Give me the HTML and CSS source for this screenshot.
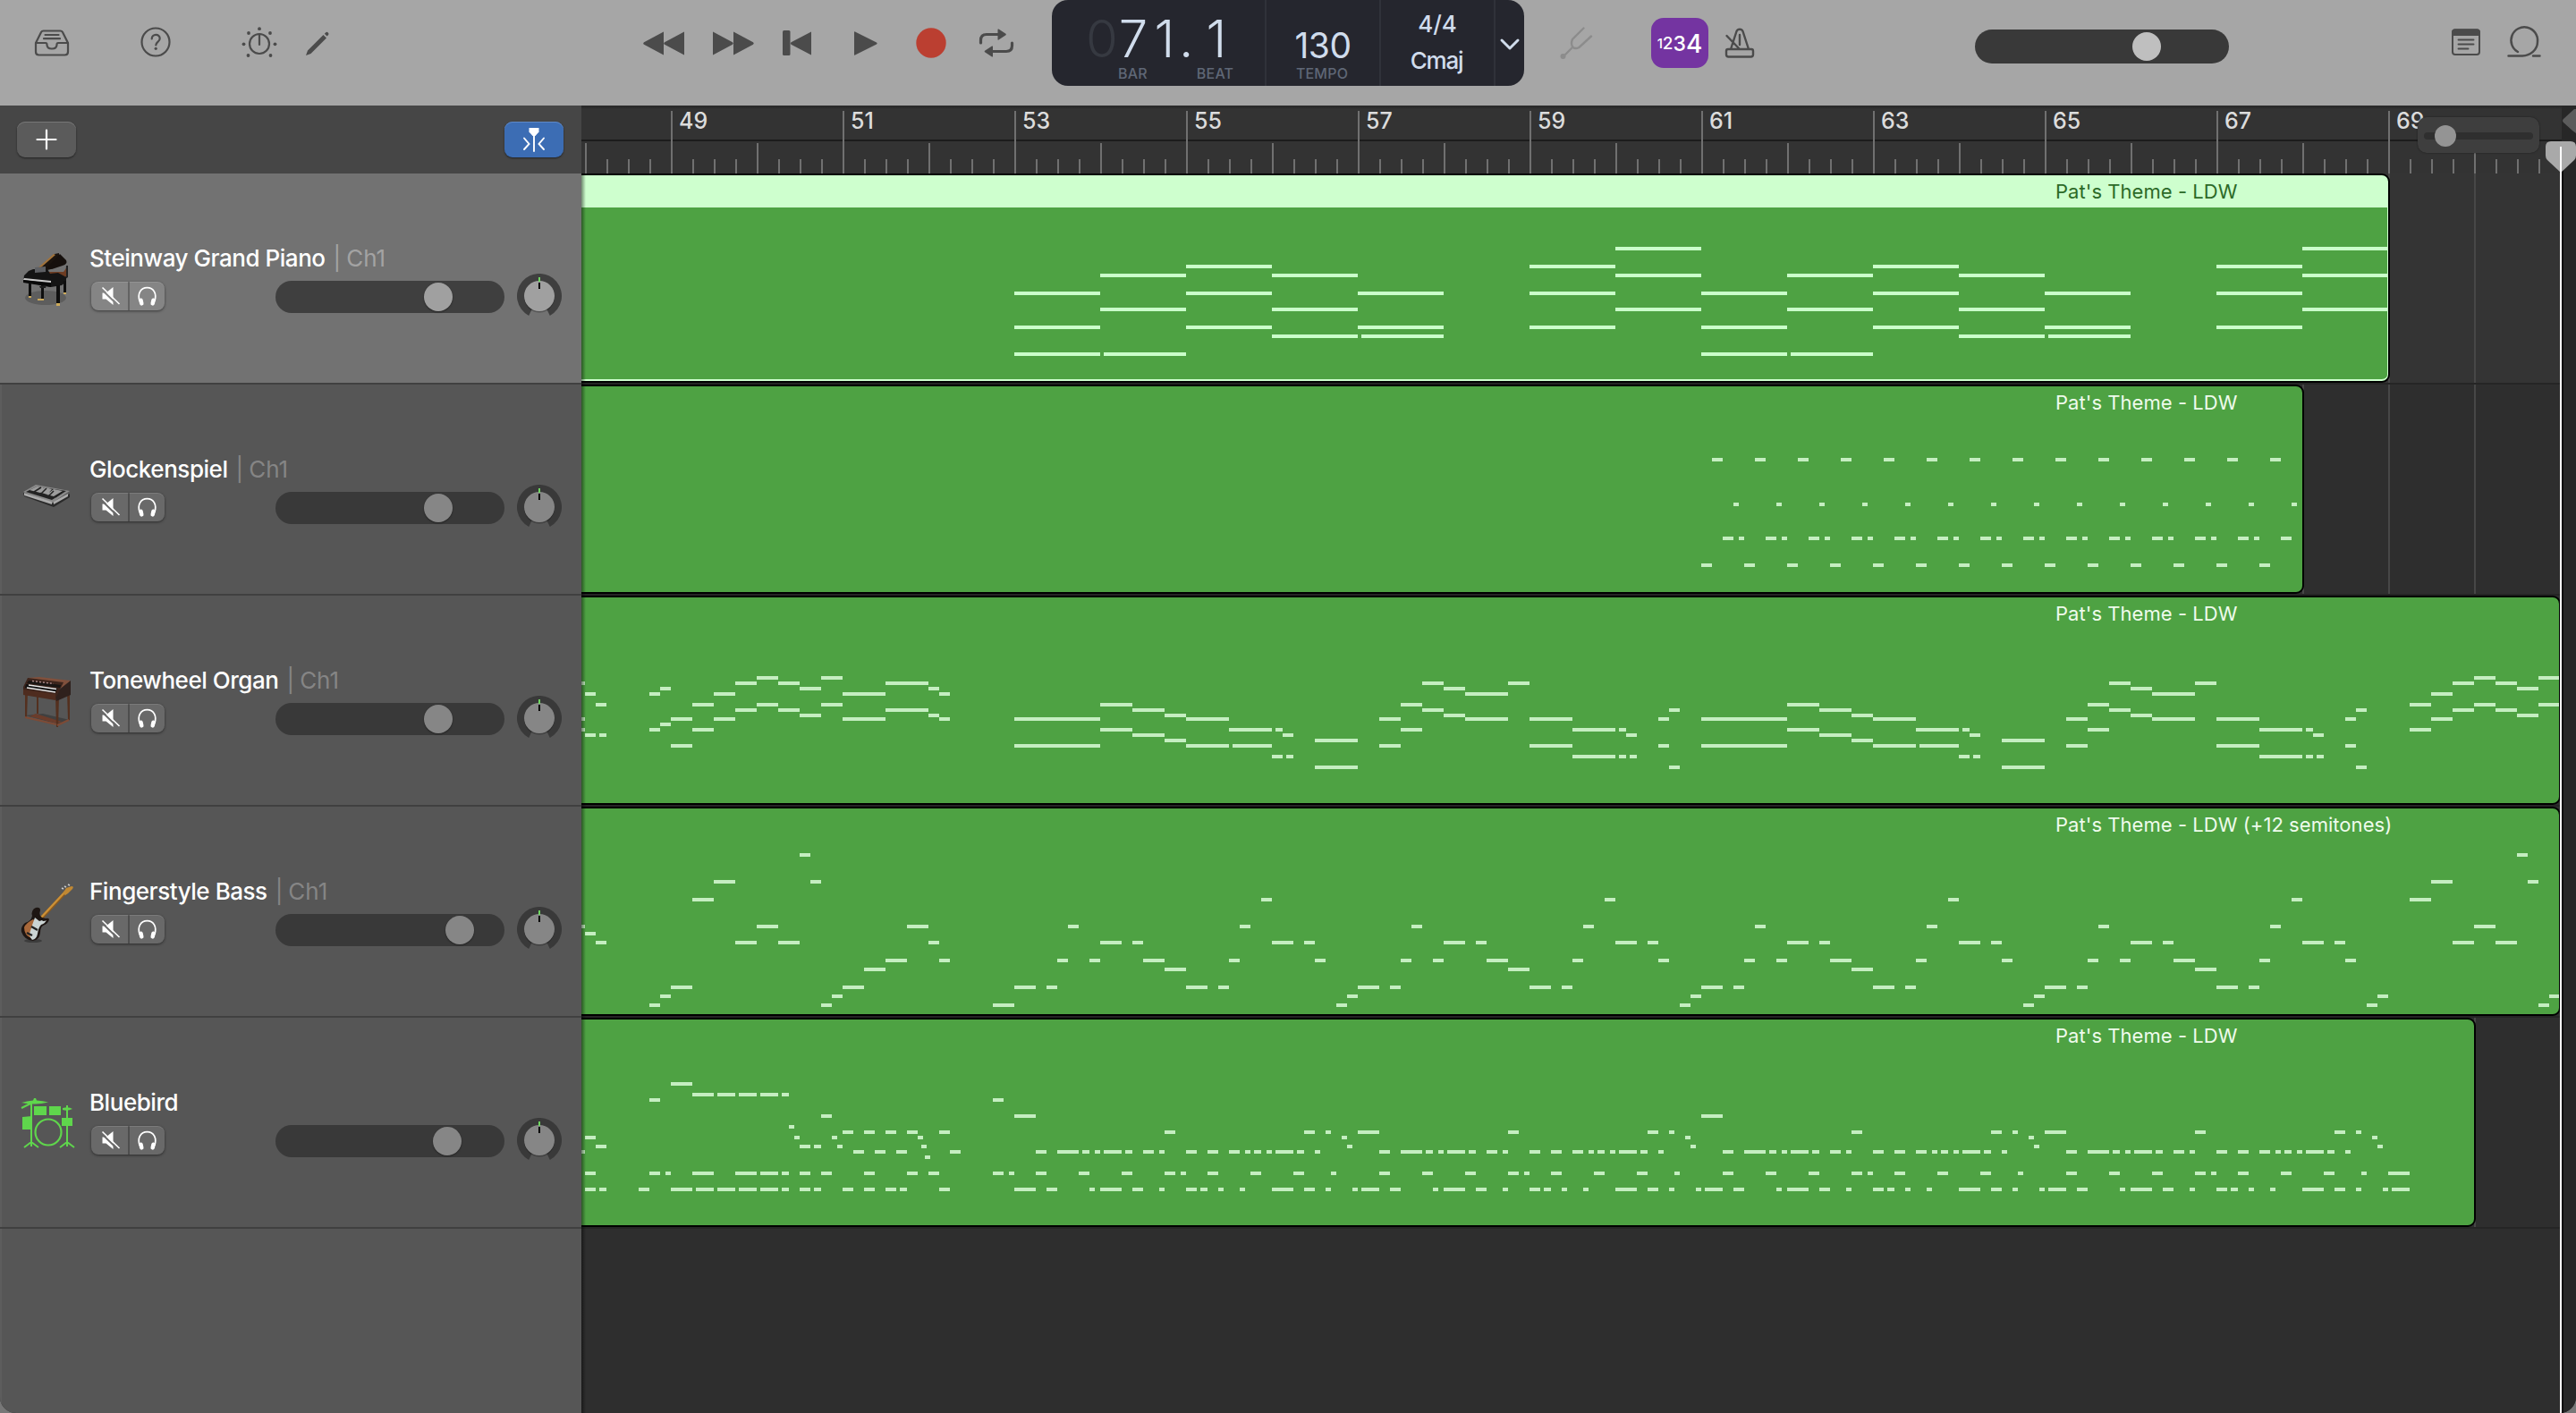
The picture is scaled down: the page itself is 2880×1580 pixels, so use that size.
FILE: index.html
```html
<!DOCTYPE html>
<html lang="en">
<head>
<meta charset="utf-8">
<title>Pat's Theme</title>
<link rel="stylesheet" href="styles.css">
</head>
<body>
<svg class="defs" aria-hidden="true">
  <symbol id="mute" viewBox="0 0 40 32"><path d="M12 12.5h4l8-6.5v20l-8-6.500h-4z" fill="#fff"/><path d="M10.500 8l19 18.500" class="cut"/><path d="M12 6.500l19 18.500" stroke="#fff" stroke-width="1.600"/></symbol>
  <symbol id="phones" viewBox="0 0 40 32"><path d="M11.500 22c-3-8.500 1-15.500 8.500-15.500s11.500 7 8.500 15.500" fill="none" stroke="#fff" stroke-width="1.800"/><rect x="11" y="18.500" width="4.600" height="8.500" rx="2.300" transform="rotate(-12 13 23)" fill="#fff"/><rect x="24.400" y="18.500" width="4.600" height="8.500" rx="2.300" transform="rotate(12 27 23)" fill="#fff"/></symbol>
  <symbol id="knob" viewBox="0 0 50 50"><path d="M13.200 47A25 25 0 1 1 36.800 47L32 37H18z" class="ring"/><circle cx="25" cy="26.500" r="17" fill="#000" opacity=".25"/><circle cx="25" cy="25" r="17" class="cap"/><path d="M25 4v5" stroke="#6fd661" stroke-width="2"/><path d="M25 10v7" stroke="#000" stroke-width="2"/></symbol>
</svg>
<div class="app">
  <header class="toolbar">
    <svg class="ic library" viewBox="0 0 40 40"><g class="ln" stroke-width="2.200"><path d="M2 20L8 8q.8-1.500 2.500-1.500h19Q31.200 6.500 32 8l6 12v10q0 3.500-3.500 3.500h-29Q2 33.500 2 30z"/><path d="M2 20h11q1.500 0 1.500 2 0 4.500 5.500 4.500t5.500-4.500q0-2 1.500-2h11M12.500 11h15M11 15.200h18"/></g></svg>
    <svg class="ic help" viewBox="0 0 40 40"><circle cx="20" cy="19" r="15.500" class="ln" stroke-width="2.200"/><path d="M15.700 15.500c0-6 9-6 9-.5 0 4-4.400 3.800-4.400 7.500" class="ln" stroke-width="2.200"/><circle cx="20.200" cy="26.300" r="1.600" class="fl"/></svg>
    <svg class="ic smart" viewBox="0 0 40 40"><circle cx="20" cy="21" r="11" class="ln" stroke-width="2.200"/><path d="M20 10.500V22" class="ln" stroke-width="2.200"/><g class="fl"><circle cx="20" cy="4.200" r="1.900"/><circle cx="8" cy="9" r="1.900"/><circle cx="32" cy="9" r="1.900"/><circle cx="2.500" cy="21.300" r="1.900"/><circle cx="37.500" cy="21.300" r="1.900"/><circle cx="7.500" cy="34" r="1.900"/><circle cx="32.500" cy="34" r="1.900"/></g></svg>
    <svg class="ic pencil" viewBox="0 0 40 40"><path d="M7 34l2-5.500L26.500 11l3.500 3.500L12.500 32zM27.800 9.700l1.500-1.500q1.200-1 2.500.3t.3 2.500l-1.500 1.500z" class="fl"/></svg>
    <svg class="tr rewind" viewBox="0 0 48 40"><path d="M24 8.200v24.600q0 1-1 .3L2 21.800q-1.600-1.300 0-2.600L23 7.900q1-.7 1 .3zM47 8.200v24.600q0 1-1 .3L25 21.800q-1.600-1.300 0-2.600L46 7.900q1-.7 1 .3z" class="fl"/></svg>
    <svg class="tr forward" viewBox="0 0 48 40"><path d="M24 8.200v24.600q0 1 1 .3l21-11.300q1.600-1.300 0-2.600L25 7.900q-1-.7-1 .3zM1 8.200v24.600q0 1 1 .3l21-11.300q1.600-1.300 0-2.600L2 7.900q-1-.7-1 .3z" class="fl"/></svg>
    <svg class="tr start" viewBox="0 0 48 40"><rect x="8" y="6" width="8.500" height="28" rx="1.500" class="fl"/><path d="M40 8.200v24.600q0 1-1 .3L17.500 21.800q-1.600-1.300 0-2.600L39 7.900q1-.7 1 .3z" class="fl"/></svg>
    <svg class="tr play" viewBox="0 0 48 40"><path d="M11 7.800v25.400q0 1 1 .4l24-12q1.500-1.100 0-2.200l-24-12q-1-.6-1 .4z" class="fl"/></svg>
    <svg class="tr record" viewBox="0 0 48 40"><circle cx="25" cy="20" r="16.700" fill="#bb3f31"/></svg>
    <svg class="tr cycle" viewBox="0 0 48 40"><path d="M6.500 20v-3q0-6.500 6.500-6.500h14M41.500 20v3q0 6.500-6.500 6.500H18" class="ln" stroke-width="3.200"/><path d="M25.500 5q0-1 1-.4l8 5.200q.8.700 0 1.400l-8 5.200q-1 .6-1-.4zM20 24q0-1-1-.4l-8 5.200q-.8.700 0 1.400l8 5.200q1 .6 1-.4z" class="fl"/></svg>
    <div class="lcd">
      <div class="cell pos">
        <div class="big"><span class="dim">0</span><span class="d7">7</span><span class="d1">1</span><span class="dot">.</span><span class="beat">1</span></div>
        <div class="caps"><span>BAR</span><span>BEAT</span></div>
      </div>
      <div class="cell tempo"><div class="mid">130</div><div class="caps one">TEMPO</div></div>
      <div class="cell sig"><div>4/4</div><div class="key">Cmaj</div></div>
      <div class="cell more"><svg width="24" height="16" viewBox="0 0 24 16"><path d="M3 3l9 9 9-9" fill="none" stroke="#d0dcec" stroke-width="3" stroke-linecap="round" stroke-linejoin="round"/></svg></div>
    </div>
    <svg class="ic fork" viewBox="0 0 40 40"><path d="M28.500 3.500L16 16q-2 4.500 0 8t7.500 1L37 12.500M16.500 24.500L6.500 34.500" fill="none" stroke="#8c8c8c" stroke-width="2.400" stroke-linecap="round"/><circle cx="5.500" cy="35" r="3" fill="#8c8c8c"/></svg>
    <div class="count"><span>1</span><span>2</span><span>3</span><span>4</span></div>
    <svg class="ic metro" viewBox="0 0 40 40"><g class="ln" stroke-width="2.400"><path d="M10 27l6.500-20q1-2.200 3.500-2.200T23.500 7L30 27M7 27h26q2 0 2 2v4q0 2.500-2.500 2.500h-25Q5 35.500 5 33v-4q0-2 2-2zM20 11v11M5.500 12l13.500 14"/></g></svg>
    <div class="master"><i></i></div>
    <svg class="ic notes" viewBox="0 0 40 40"><rect x="5" y="5.500" width="30" height="27.500" rx="3" class="ln" stroke-width="2"/><path d="M4 11V8q0-3.800 4-3.800h24q4 0 4 3.800v4H4z" class="fl"/><path d="M11.500 16.500h17M11.500 21.500h17M11.500 26.500h11" class="ln" stroke-width="1.900"/></svg>
    <svg class="ic loop" viewBox="0 0 40 40"><path d="M2.500 34.500H18c9-.5 17-6.500 17-16A14.800 14.800 0 1 0 13 30M30 34.500h7.500" class="ln" stroke-width="2.500"/></svg>
  </header>

  <main class="body">
    <aside class="side">
      <div class="sidehead">
        <div class="btn"><svg width="24" height="24" viewBox="0 0 24 24"><path d="M12 1.500v21M1.500 12h21" stroke="#fff" stroke-width="2.200" stroke-linecap="round"/></svg></div>
        <div class="btn blue"><svg width="28" height="30" viewBox="0 0 28 30"><path d="M8.500 2h11v4.500L15.500 11h-3L8.500 6.500z" fill="#fff"/><path d="M14 8v20M3 13.500l5.500 6.500L3 26M25 13.500L19.500 20l5.500 6" fill="none" stroke="#fff" stroke-width="1.900" stroke-linecap="round"/></svg></div>
      </div>

      <section class="track selected">
        <svg class="inst" viewBox="0 0 64 64">
          <ellipse cx="31" cy="53" rx="23" ry="8" fill="#000" opacity=".18"/>
          <path d="M54 17h2v13l-3 2z" fill="#222"/>
          <path d="M16 26L41 4l5-1 0 3-9 15z" fill="#1b140f"/><path d="M16 25L40 4l2 1-23 20z" fill="#a2733a"/>
          <path d="M32 20l15-16 7 7q2 4-4 6l-12 4z" fill="#16100d"/>
          <path d="M24 24h27l3-4 0 9-24 2z" fill="#6d3c22"/>
          <path d="M7 28l5-5 5-2h16l3 5 9-1 9 5v5l-5 4-12 2L6 35z" fill="#141414"/>
          <path d="M19 19l12-1v6l-12 1z" fill="#5d5f63"/>
          <path d="M7 31l30 3 0 2L6 33z" fill="#c9c9c9"/><path d="M6 33l31 4v4L6 36z" fill="#080808"/>
          <path d="M12 36h3v16h-3zM26 39h3v15h-3zM43 39h4v21h-4zM51 34h3v14h-3z" fill="#0e0e0e"/><path d="M24 40l8-1-1 3h-6z" fill="#1c1c1c"/>
          <path d="M12 51h3v2h-3zM22 54h7v2h-7zM43 59h4v3h-4zM51 47h3v2h-3z" fill="#cba95a"/>
        </svg>
        <div class="info"><div class="name">Steinway Grand Piano<span class="sep">|</span><span class="ch">Ch1</span></div>
          <div class="controls"><div class="pair"><svg><use href="#mute"/></svg><svg><use href="#phones"/></svg></div><div class="vol"><i style="left:166px"></i></div><svg class="knob"><use href="#knob"/></svg></div></div>
      </section>

      <section class="track">
        <svg class="inst" viewBox="0 0 64 64">
          <path d="M6 35L39 47 58 36v4L40 51 7 39z" fill="#2a2a2a"/>
          <path d="M6 34L20 26 58 33 39 46z" fill="#8a8a8a"/>
          <path d="M9 34l12-6 33 5-16 10z" fill="#222"/>
          <path d="M13 32l8-4 8 1-4 6zM23 34l7-5 8 2-5 6zM32 37l8-6 10 2-10 6z" fill="#9c9c9c"/>
          <path d="M7 35l31 10v3L7 38zM40 45l16-9v3l-16 9z" fill="#aaa"/>
          <path d="M18 34l8-5M26 36l6-6M34 39l6-6M42 40l7-5" stroke="#222" stroke-width="1.500"/>
        </svg>
        <div class="info"><div class="name">Glockenspiel<span class="sep">|</span><span class="ch">Ch1</span></div>
          <div class="controls"><div class="pair"><svg><use href="#mute"/></svg><svg><use href="#phones"/></svg></div><div class="vol"><i style="left:166px"></i></div><svg class="knob"><use href="#knob"/></svg></div></div>
      </section>

      <section class="track">
        <svg class="inst" viewBox="0 0 64 64">
          <path d="M8 48L46 58l12-5-30-7z" fill="#000" opacity=".25"/>
          <path d="M20 46l-7 3 31 8 5-2z" fill="#6b3c2b"/>
          <path d="M8 22h3l-1 29H8zM42 27h4l-1 34h-2zM55 22h3v31h-2zM21 24h2v22h-2z" fill="#54301f"/>
          <path d="M8 50l35 8M44 59l13-6" stroke="#7d4a35" stroke-width="2"/>
          <path d="M11 6l13-1 35 4-9 8-41-5z" fill="#80503c"/>
          <path d="M50 16l9-7v16L43 32l-2-8z" fill="#2f211d"/>
          <path d="M6 16l5-10 40 5-5 10-4 9-36-6z" fill="#3b241c"/>
          <path d="M12 9l36 5-1 3-37-5z" fill="#191513"/><path d="M16 9.500l24 3" stroke="#a88" stroke-width="1.300" stroke-dasharray="2 2"/>
          <path d="M9 13l35 5-2 4L8 17z" fill="#111"/><path d="M12 14l31 4.500M10 17l32 5" stroke="#e6e6e6" stroke-width="1.500"/>
          <path d="M6 19l36 5v7L6 25z" fill="#4e2c1f"/>
        </svg>
        <div class="info"><div class="name">Tonewheel Organ<span class="sep">|</span><span class="ch">Ch1</span></div>
          <div class="controls"><div class="pair"><svg><use href="#mute"/></svg><svg><use href="#phones"/></svg></div><div class="vol"><i style="left:166px"></i></div><svg class="knob"><use href="#knob"/></svg></div></div>
      </section>

      <section class="track">
        <svg class="inst" viewBox="0 0 64 64">
          <ellipse cx="17" cy="64" rx="10" ry="2" fill="#000" opacity=".3"/>
          <path d="M24 41L53 10" stroke="#8d5a1d" stroke-width="3.800"/><path d="M24 40L53 9" stroke="#cb9138" stroke-width="2.300"/>
          <path d="M50 11l4-6 6-2q3 0 1 3l-5 5-3 2z" fill="#c08833"/>
          <path d="M49 5l2 1M52 3l2 1M56 1l2 1" stroke="#ccc" stroke-width="1.500"/>
          <path d="M16 36q-2-6 4-9 5-1 5 3-2 6 2 8l4 1q3-1 4 1-1 5-7 7-3 2-3 8-1 8-8 9-10-1-13-10-1-6 4-10 7-2 8-8z" fill="#1d1512"/>
          <path d="M17 40q-8 4-10 9 0 9 8 12 5 0 6-8l3-8z" fill="#a9683a"/>
          <path d="M19 38l5 4 3-1 1 1q3 0 4-1-2 4-6 5-3 3-4 10-1 6-6 7-3-3-3-7 3-10 6-18z" fill="#cbd4d4"/>
          <path d="M15 48l7 4M10 55l6 3" stroke="#222" stroke-width="2.500"/>
        </svg>
        <div class="info"><div class="name">Fingerstyle Bass<span class="sep">|</span><span class="ch">Ch1</span></div>
          <div class="controls"><div class="pair"><svg><use href="#mute"/></svg><svg><use href="#phones"/></svg></div><div class="vol"><i style="left:190px"></i></div><svg class="knob"><use href="#knob"/></svg></div></div>
      </section>

      <section class="track">
        <svg class="inst" viewBox="0 0 64 64">
          <g fill="#5fd64c"><path d="M4 9q6-2 13-2.500l1-2.500h2l1 2.500q7 .5 13 2-8 2-15 2T4 9zM18 13h14v10H18zM35 13h13v10H35zM5 25l11-1v15H5zM49 26h12v9H49zM50 15q7-2 11 1-6 3-11 1z"/></g>
          <g fill="none" stroke="#5fd64c" stroke-width="2"><path d="M4 15l10-5M15 10v38M7 59l8-6 8 6M15 46v12M55 12v38M47 59l8-6 8 6M55 46v12"/><circle cx="34" cy="42" r="14.500" stroke-width="2.200"/></g>
        </svg>
        <div class="info"><div class="name">Bluebird</div>
          <div class="controls"><div class="pair"><svg><use href="#mute"/></svg><svg><use href="#phones"/></svg></div><div class="vol"><i style="left:176px"></i></div><svg class="knob"><use href="#knob"/></svg></div></div>
      </section>
    </aside>

    <div class="arrange">
      <div class="ruler"><div class="scale"><span>49</span><span>51</span><span>53</span><span>55</span><span>57</span><span>59</span><span>61</span><span>63</span><span>65</span><span>67</span><span>69</span></div></div>
      <div class="lane selected"><div class="region picked r1"><svg class="notes-map" id="piano"></svg><span class="label">Pat's Theme - LDW</span></div></div>
      <div class="lane"><div class="region r2"><svg class="notes-map" id="glock"></svg><span class="label">Pat's Theme - LDW</span></div></div>
      <div class="lane"><div class="region r3"><svg class="notes-map" id="organ"></svg><span class="label">Pat's Theme - LDW</span></div></div>
      <div class="lane"><div class="region r4"><svg class="notes-map" id="bass"></svg><span class="label">Pat's Theme - LDW (+12 semitones)</span></div></div>
      <div class="lane"><div class="region r5"><svg class="notes-map" id="drums"></svg><span class="label">Pat's Theme - LDW</span></div></div>
      <div class="edge"></div>
      <div class="past"></div>
      <div class="zoomer"><i></i></div>
      <svg class="endmark" width="16" height="30" viewBox="0 0 16 30"><path d="M16 2l-2 0-12 11q-2 2 0 4l10 9 4 3z" fill="#5c5c5c"/></svg>
      <div class="playline"></div>
      <svg class="playcap" width="34" height="36" viewBox="0 0 34 36"><path d="M0 6q0-6 6-6h22q6 0 6 6v10q0 3-2 5L17 35 2 21q-2-2-2-5z" fill="#a9a9a9"/><path d="M17 6v30" stroke="#fff" stroke-width="2"/></svg>
    </div>
  </main>
</div>
<script src="notes.js"></script>
</body>
</html>
```
FILE: styles.css
```css
* { box-sizing: border-box; }
body { margin: 0; background: #777; font-family: Inter, "Liberation Sans", sans-serif; }
.defs { position: absolute; width: 0; height: 0; }
.app { width: 2880px; height: 1580px; display: flex; flex-direction: column; overflow: hidden; border-radius: 0 0 18px 18px; background: #2e2e2e; }

.toolbar { height: 118px; flex: none; display: flex; align-items: flex-start; padding-top: 28px; background: #a6a6a6; }
.toolbar > * { flex: none; }
.ic { width: 40px; height: 40px; }
.tr { width: 48px; height: 40px; }
.ln { fill: none; stroke: #4b4b4b; stroke-linecap: round; stroke-linejoin: round; }
.fl { fill: #4b4b4b; }
.library { margin-left: 38px; }
.help, .smart { margin-left: 76px; }
.pencil { margin-left: 25px; }
.rewind { margin-left: 343px; }
.forward { margin-left: 30px; }
.start { margin-left: 23px; }
.play { margin-left: 29px; }
.record { margin-left: 24px; }
.cycle { margin-left: 26px; }
.fork { margin-left: 38px; }
.metro { margin-left: 15px; }
.notes { margin-left: 245px; }
.loop { margin-left: 25px; }

.lcd { margin: -28px 0 0 38px; width: 528px; height: 96px; border-radius: 18px; background: #25262e; color: #d0dcec; display: grid; grid-template-columns: 238px 128px 128px 34px; }
.cell + .cell { border-left: 2px solid #30323a; }
.pos { padding: 8px 0 0 38px; }
.big { height: 65px; line-height: 71px; font-size: 58px; font-weight: 350; display: flex; }
.big span { width: 37px; text-align: center; }
.big .dim { color: #363941; width: 34px; }
.big .d7 { width: 38px; }
.big .d1 { width: 32px; }
.big .dot { width: 16px; }
.big .beat { width: 52px; }
.caps { font-size: 16px; line-height: 18px; font-weight: 500; letter-spacing: .2px; color: #5f6776; display: flex; }
.pos .caps { padding-left: 36px; gap: 55px; }
.caps.one { justify-content: center; padding-right: 2px; }
.tempo { padding-top: 23px; }
.mid { height: 50px; line-height: 56px; font-size: 39px; text-align: center; letter-spacing: -.5px; }
.sig { padding-top: 7px; text-align: center; font-size: 26px; line-height: 40px; font-weight: 550; }
.key { letter-spacing: -1.2px; padding: 1px 2px 0 0; }
.more { display: flex; align-items: center; justify-content: center; padding-top: 4px; }

.count { margin: -8px 0 0 64px; width: 64px; height: 56px; border-radius: 14px; background: #7434a1; color: #fff; font-weight: 500; display: flex; align-items: center; justify-content: center; padding-top: 1px; }
.count span:nth-child(1) { font-size: 15px; }
.count span:nth-child(2) { font-size: 19px; }
.count span:nth-child(3) { font-size: 23px; }
.count span:nth-child(4) { font-size: 28px; }
.master { margin: 5px 0 0 243px; width: 284px; height: 38px; border-radius: 19px; background: #393939; position: relative; }
.master i { position: absolute; left: 176px; top: 3px; width: 32px; height: 32px; border-radius: 50%; background: #bfbfbf; }

.body { flex: 1; display: flex; }
.side { width: 650px; flex: none; background: #565656; box-shadow: inset 2px 0 #5d5d5d; }
.sidehead { height: 76px; padding: 18px 20px 0 19px; display: flex; justify-content: space-between; background: #464646; }
.btn { width: 66px; height: 40px; border-radius: 9px; background: #5b5b5b; box-shadow: inset 0 1px #777, 0 1px 2px #222; display: flex; align-items: center; justify-content: center; }
.btn.blue { background: #3c6db4; box-shadow: inset 0 1px #6089c4, 0 1px 2px #222; }

.track { height: 236px; border-bottom: 2px solid #404040; padding-left: 20px; display: flex; align-items: flex-start; --ring: #393939; --cap: #868686; --btn: #696969; }
.track.selected { background: #727272; --ring: #3f3f3f; --cap: #a0a0a0; --btn: #858585; }
.inst { width: 64px; height: 64px; margin-top: 86px; flex: none; overflow: visible; }
.info { flex: 1; padding: 78px 22px 0 16px; }
.name { height: 34px; line-height: 33px; font-size: 26px; font-weight: 500; letter-spacing: -.46px; color: #fff; white-space: nowrap; }
.sep, .ch { font-weight: 400; color: #858585; letter-spacing: 0; }
.selected .sep, .selected .ch { color: #a3a3a3; }
.sep { margin: 0 6px 0 9px; }
.controls { display: flex; align-items: center; height: 50px; }
.pair { margin-left: 2px; width: 82px; height: 32px; display: flex; border-radius: 8px; background: var(--btn); box-shadow: inset 0 1px rgba(255,255,255,.12), 0 1px 3px rgba(0,0,0,.5); }
.pair svg { width: 41px; height: 32px; }
.pair svg + svg { border-left: 2px solid rgba(0,0,0,.25); }
.cut { stroke: var(--btn); stroke-width: 2; }
.vol { position: relative; margin: 2px 14px 0 auto; width: 256px; height: 36px; border-radius: 18px; background: var(--ring); }
.vol i { position: absolute; top: 2px; width: 32px; height: 32px; border-radius: 50%; background: var(--cap); box-shadow: 0 1px 2px rgba(0,0,0,.4); }
.knob { width: 50px; height: 50px; }
.ring { fill: var(--ring); }
.cap { fill: var(--cap); }

.arrange { position: relative; width: 2230px; overflow: hidden; }
.ruler { height: 76px; background: linear-gradient(#2a2a2a 2px, #333 4px 38px, #1c1c1c 38px 40px, #333 40px); }
.scale { width: 2212px; height: 76px; display: flex; padding-left: 109px; overflow: hidden;
  background:
    repeating-linear-gradient(90deg, #707070 0 2px, transparent 2px 192px) 100px 6px / 2112px 70px no-repeat,
    repeating-linear-gradient(90deg, #707070 0 2px, transparent 2px 96px) 4px 42px / 2208px 34px no-repeat,
    repeating-linear-gradient(90deg, #707070 0 2px, transparent 2px 24px) 4px 60px / 2208px 16px no-repeat; }
.scale span { flex: none; width: 192px; font-size: 25px; font-weight: 500; line-height: 34px; color: #dcdcdc; }
.lane { height: 236px; border-bottom: 2px solid #252525; background: repeating-linear-gradient(90deg, #474747 0 2px, transparent 2px 96px) 4px 0, #2e2e2e; }
.lane.selected { background-color: #343434; }
.region { position: relative; height: 234px; border: 2px solid #000; border-left: 0; border-radius: 0 9px 9px 0; background: #4ea243; overflow: hidden; color: #eefbec; }
.region.picked { background: linear-gradient(#ceffce 36px, #4ea243 36px); color: #2c6a28; box-shadow: inset 0 -2px #ceffce, inset -1px 0 #ceffce; }
.r1 { width: 2022px; }
.r2 { width: 1926px; }
.r3, .r4 { width: 2213px; }
.r5 { width: 2118px; }
.notes-map { display: block; width: 100%; height: 230px; margin-bottom: -230px; fill: #c5eec1; }
.picked .notes-map { fill: #caffca; }
.label { display: block; margin-left: 1648px; font-size: 22px; line-height: 36px; letter-spacing: .05px; white-space: nowrap; }

.edge { position: absolute; left: 0; top: 76px; width: 5px; bottom: 0; background: linear-gradient(90deg, rgba(0,0,0,.45), transparent); }
.past { position: absolute; left: 2214px; top: 0; right: 0; bottom: 0; background: #272727; }
.zoomer { position: absolute; left: 2053px; top: 13px; width: 136px; height: 40px; border-radius: 10px; background: #3e3e3e; box-shadow: 0 0 2px #1c1c1c; }
.zoomer::before { content: ""; position: absolute; left: 7px; top: 17px; width: 122px; height: 8px; border-radius: 4px; background: #2f2f2f; }
.zoomer i { position: absolute; left: 19px; top: 9px; width: 24px; height: 24px; border-radius: 50%; background: #949494; }
.endmark { position: absolute; left: 2214px; top: 2px; }
.playline { position: absolute; left: 2212px; top: 72px; width: 2px; bottom: 0; background: #fff; box-shadow: 1px 0 0 1px #0b0b0b; }
.playcap { position: absolute; left: 2196px; top: 40px; }
```
FILE: notes.js
```javascript
// Note lists per region. Each line is "y: start-end ..." in sixteenths counted from bar 49;
// y is the note's top edge within the region. One sixteenth is 6px wide.
const STEP = 6, ORIGIN = 100;

function draw(id, rows) {
  let d = '';
  for (const [y, notes] of rows)
    for (const [a, b] of notes) {
      const x1 = Math.round(ORIGIN + a * STEP), x2 = Math.round(ORIGIN + b * STEP);
      d += `M${x1} ${y}h${x2 - x1}v4h${x1 - x2}z`;
    }
  const path = document.createElementNS('http://www.w3.org/2000/svg', 'path');
  path.setAttribute('d', d);
  document.getElementById(id).append(path);
}
// "a,b a,b" -> [[a,b],[a,b]]
const n = s => s.split(' ').map(p => p.split(',').map(Number));
const shift = (list, by) => list.map(([a, b]) => [a + by, b + by]);
// Whole-bar notes counted from bar 53; "+" marks a slightly late start.
const bars = s => s.split(' ').map(p => {
  const b = 64 + parseInt(p) * 16;
  return [p.endsWith('+') ? b + 0.67 : b, b + 16];
});
const every = (a, b, count) => Array.from({ length: count }, (_, i) => [a + i * 8, b + i * 8]);

draw('piano', [
  [80, bars('7 15')], [100, bars('2 6 10 14')], [110, bars('1 3 7 9 11 15')],
  [130, bars('0 2 4 6 8 10 12 14')], [148, bars('1 3 7 9 11 15')],
  [168, bars('0 2 4 6 8 10 12 14')], [178, bars('3 4+ 11 12+')], [198, bars('0 1+ 8 9+')]
]);

draw('glock', [
  [80, every(194, 196, 14)], [130, every(198, 199, 14)],
  [168, [...every(196, 198, 14), ...every(199, 200, 13)]], [198, every(192, 194, 14)]
]);

draw('organ', [
  [88, n('16,20 28,32 336,340 348,352')],
  [94, n('-18,-16 12,16 20,24 40,48 140,144 156,160 268,272 284,288 332,336 340,344')],
  [100, n('-2,0 24,28 48,50 144,148 272,276 344,348')],
  [106, n('-16,-14 -4,-2 8,12 32,40 50,52 148,156 276,284 328,332')],
  [118, n('-14,-12 4,8 16,20 28,32 80,86 136,140 208,214 264,268 324,328 336,340 348,352')],
  [124, n('12,16 20,24 40,48 86,92 140,144 186,188 214,220 268,272 314,316 332,336 340,344')],
  [130, n('24,28 48,50 92,96 144,148 220,224 272,276 344,348')],
  [134, n('-18,-16 0,4 8,12 32,40 50,52 64,80 96,104 132,136 148,156 160,168 184,186 192,208 224,232 260,264 276,284 288,296 312,314 328,332')],
  [140, n('-2,0')],
  [146, n('-18,-16 -4,-2 4,8 80,86 104,112 112.67,114 136,140 168,176 176.67,178 208,214 232,240 240.67,242 264,268 296,304 304.67,306 324,328')],
  [152, n('-16,-14 -13.33,-12 86,92 114,116 178,180 214,220 242,244 306,308')],
  [158, n('92,96 120,128 220,224 248,256')],
  [164, n('0,4 64,80 96,104 104.67,112 132,136 160,168 184,186 192,208 224,232 232.67,240 260,264 288,296 312,314')],
  [176, n('112,114 114.67,116 168,176 176.67,178 178.67,180 240,242 242.67,244 296,304 304.67,306 306.67,308')],
  [188, n('120,128 186,188 248,256 314,316')]
]);

draw('bass', [
  [50, n('24,26 344,346')],
  [80, n('8,12 26,28 328,332 346,348')],
  [100, n('4,8 110,112 174,176 238,240 302,304 324,328')],
  [130, n('-18,-16 16,20 44,48 74,76 106,108 138,140 170,172 202,204 234,236 266,268 298,300 336,340')],
  [138, n('-16,-14')],
  [148, n('-14,-12 12,16 20,24 48,50 80,84 86,88 112,116 118,120 144,148 150,152 176,180 182,184 208,212 214,216 240,244 246,248 272,276 278,280 304,308 310,312 332,336 340,344')],
  [168, n('40,44 50,52 72,74 78,80 88,92 104,106 120,122 136,138 142,144 152,156 168,170 184,186 200,202 206,208 216,220 232,234 248,250 264,266 270,272 280,284 296,298 312,314')],
  [178, n('36,40 92,96 156,160 220,224 284,288')],
  [198, n('0,4 32,36 64,68 70,72 96,100 102,104 128,132 134,136 160,164 166,168 192,196 198,200 224,228 230,232 256,260 262,264 288,292 294,296')],
  [208, n('-2,0 30,32 126,128 190,192 254,256 318,320 350,352')],
  [218, n('-4,-2 28,30 60,64 124,126 188,190 252,254 316,318 348,350')]
]);

// The drum part repeats every four bars from bar 53.
const hat = n('4,6 8,12 12.67,14 15,16 16.67,20 20.67,22 24,26 27,28 32,34 36,38 40,42 43,44 44.67,46 47,48 48.67,52 52.67,54 56,57');
const snare = n('4,6 12,14 20,22 28,30 31,32 36,38 44,46 52,54 59,60');
const kick = n('6,8 14,15 16,20 22,24 27,28 32,34 34.67,36 38,39 42,43 48,52 54,56 58,59 63,64');
const loop = list => [64, 128, 192, 256].flatMap(s => shift(list, s));
draw('drums', [
  [70, n('0,4')], [82, n('4,8 8.67,12 12.67,16 16.67,20 20.67,22')],
  [88, n('-4,-2 60,62')], [106, n('28,30 64,68 192,196')], [118, n('22,23')],
  [124, [...n('32,34 36,38 40,42 44,46 50,52 128,132 256,260'), ...loop(n('28,30 54,56 58,59'))]],
  [130, [...n('-16,-14 23,24 30,31 46,47'), ...loop(n('61,62'))]],
  [140, [...n('-14,-12 24,26 26.67,28 31,32 46.67,47.67'), ...loop(n('62,63'))]],
  [146, [...n('-18,-16 34,36 38,40 42,44 52,54'), ...loop(hat)]],
  [152, n('47.33,48.33')],
  [170, [...n('-16,-14 -4,-2 -1,0 4,8 12,16 16.67,20 20.67,22 24,26 28,30 36,38 44,46 48,50 60,62 63,64 320,324'), ...loop(snare)]],
  [188, [...n('-16,-14 -13.33,-12 -6,-4 0,4 4.67,8 8.67,12 12.67,16 16.67,20 20.67,22 24,26 26.67,28 32,34 36,38 40,42 42.67,44 50,52 64,68 128.67,132 192.67,196 256.67,260 320.67,324'), ...loop(kick)]]
]);
```
